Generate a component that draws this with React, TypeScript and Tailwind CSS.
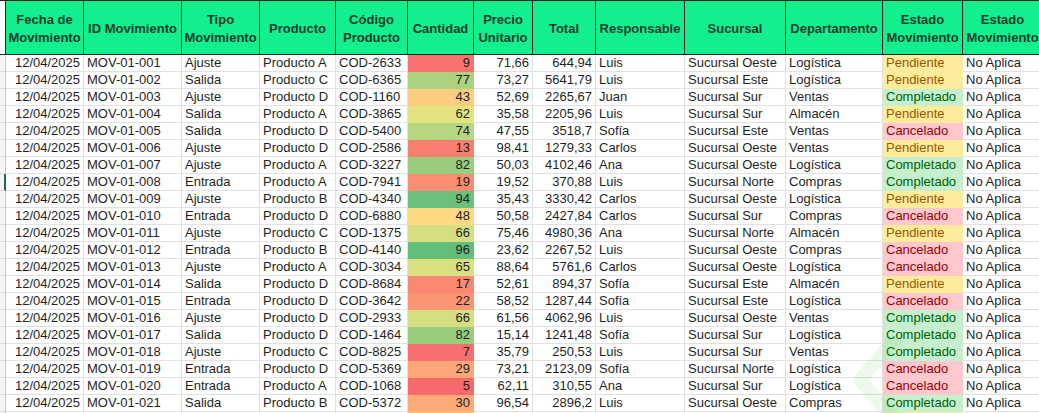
import React from "react";

type Estado = "Pendiente" | "Completado" | "Cancelado";

interface Movimiento {
  id: string;
  tipo: string;
  producto: string;
  codigo: string;
  cantidad: number;
  precio: string;
  total: string;
  responsable: string;
  sucursal: string;
  departamento: string;
  estado: Estado;
}

const COLS =
  "grid grid-cols-[6px_78px_98px_78px_76px_72px_66px_59px_63px_89px_101px_97px_80px_80px]";

const HEADERS = [
  "Fecha de Movimiento",
  "ID Movimiento",
  "Tipo Movimiento",
  "Producto",
  "Código Producto",
  "Cantidad",
  "Precio Unitario",
  "Total",
  "Responsable",
  "Sucursal",
  "Departamento",
  "Estado Movimiento",
  "Estado Movimiento",
];

const raw: [string, string, string, string, number, string, string, string, string, string, Estado][] = [
  ["001", "Ajuste", "Producto A", "COD-2633", 9, "71,66", "644,94", "Luis", "Sucursal Oeste", "Logística", "Pendiente"],
  ["002", "Salida", "Producto C", "COD-6365", 77, "73,27", "5641,79", "Luis", "Sucursal Este", "Logística", "Pendiente"],
  ["003", "Ajuste", "Producto D", "COD-1160", 43, "52,69", "2265,67", "Juan", "Sucursal Sur", "Ventas", "Completado"],
  ["004", "Salida", "Producto A", "COD-3865", 62, "35,58", "2205,96", "Luis", "Sucursal Sur", "Almacén", "Pendiente"],
  ["005", "Salida", "Producto D", "COD-5400", 74, "47,55", "3518,7", "Sofía", "Sucursal Este", "Ventas", "Cancelado"],
  ["006", "Ajuste", "Producto D", "COD-2586", 13, "98,41", "1279,33", "Carlos", "Sucursal Oeste", "Ventas", "Pendiente"],
  ["007", "Ajuste", "Producto A", "COD-3227", 82, "50,03", "4102,46", "Ana", "Sucursal Oeste", "Logística", "Completado"],
  ["008", "Entrada", "Producto A", "COD-7941", 19, "19,52", "370,88", "Luis", "Sucursal Norte", "Compras", "Completado"],
  ["009", "Ajuste", "Producto B", "COD-4340", 94, "35,43", "3330,42", "Carlos", "Sucursal Oeste", "Logística", "Pendiente"],
  ["010", "Entrada", "Producto D", "COD-6880", 48, "50,58", "2427,84", "Carlos", "Sucursal Sur", "Compras", "Cancelado"],
  ["011", "Ajuste", "Producto C", "COD-1375", 66, "75,46", "4980,36", "Ana", "Sucursal Norte", "Almacén", "Pendiente"],
  ["012", "Entrada", "Producto B", "COD-4140", 96, "23,62", "2267,52", "Luis", "Sucursal Oeste", "Compras", "Cancelado"],
  ["013", "Ajuste", "Producto A", "COD-3034", 65, "88,64", "5761,6", "Carlos", "Sucursal Oeste", "Logística", "Cancelado"],
  ["014", "Salida", "Producto D", "COD-8684", 17, "52,61", "894,37", "Sofía", "Sucursal Este", "Almacén", "Pendiente"],
  ["015", "Entrada", "Producto D", "COD-3642", 22, "58,52", "1287,44", "Sofía", "Sucursal Este", "Logística", "Cancelado"],
  ["016", "Ajuste", "Producto D", "COD-2933", 66, "61,56", "4062,96", "Luis", "Sucursal Oeste", "Ventas", "Completado"],
  ["017", "Salida", "Producto D", "COD-1464", 82, "15,14", "1241,48", "Sofía", "Sucursal Sur", "Logística", "Completado"],
  ["018", "Ajuste", "Producto C", "COD-8825", 7, "35,79", "250,53", "Luis", "Sucursal Sur", "Ventas", "Completado"],
  ["019", "Entrada", "Producto D", "COD-5369", 29, "73,21", "2123,09", "Sofía", "Sucursal Norte", "Logística", "Cancelado"],
  ["020", "Entrada", "Producto A", "COD-1068", 5, "62,11", "310,55", "Ana", "Sucursal Sur", "Logística", "Cancelado"],
  ["021", "Salida", "Producto B", "COD-5372", 30, "96,54", "2896,2", "Luis", "Sucursal Oeste", "Compras", "Completado"],
];

const rows: Movimiento[] = raw.map((r) => ({
  id: `MOV-01-${r[0]}`,
  tipo: r[1],
  producto: r[2],
  codigo: r[3],
  cantidad: r[4],
  precio: r[5],
  total: r[6],
  responsable: r[7],
  sucursal: r[8],
  departamento: r[9],
  estado: r[10],
}));

// 3-colour scale like Excel's red / yellow / green
function scaleColor(v: number) {
  const min = 5;
  const mid = 55;
  const max = 96;
  const lo = [248, 105, 107];
  const md = [255, 235, 132];
  const hi = [99, 190, 123];
  let a = lo;
  let b = md;
  let t = (v - min) / (mid - min);
  if (v >= mid) {
    a = md;
    b = hi;
    t = (v - mid) / (max - mid);
  }
  t = Math.max(0, Math.min(1, t));
  const c = a.map((x, i) => Math.round(x + (b[i] - x) * t));
  return `rgb(${c[0]}, ${c[1]}, ${c[2]})`;
}

const estadoClass: Record<Estado, string> = {
  Pendiente: "bg-[#ffeb9c] text-[#9c5700]",
  Completado: "bg-[#c6efce] text-[#006100]",
  Cancelado: "bg-[#ffc7ce] text-[#9c0006]",
};

const cell = "h-[17px] border-r border-b border-[#e1e1e1] px-[3px] flex items-center whitespace-nowrap overflow-hidden";

export default function App() {
  return (
    <div className="relative w-[1039px] h-[413px] overflow-hidden bg-white font-['Liberation_Sans',Arial,sans-serif] text-[13px] leading-[16px] text-[#1f1f1f]">
      <div className={`${COLS} border-t border-[#222]`}>
        <div className="h-[54px] bg-white border-r border-b border-[#222]" />
        {HEADERS.map((h, i) => (
          <div
            key={i}
            className="h-[54px] bg-[#12ef8e] border-r border-b border-[#222] flex items-center justify-center text-center font-bold leading-[18px] text-[#123d2b] px-[1px] pt-[3px]"
          >
            {h}
          </div>
        ))}
      </div>

      {rows.map((r, idx) => (
        <div key={r.id} className={COLS}>
          <div
            className={`h-[17px] border-b border-[#dadada] bg-[#f5f5f5] ${
              idx === 7 ? "border-r-2 border-r-[#1e7145]" : "border-r border-r-[#c8c8c8]"
            }`}
          />
          <div className={`${cell} justify-end`}>12/04/2025</div>
          <div className={cell}>{r.id}</div>
          <div className={cell}>{r.tipo}</div>
          <div className={cell}>{r.producto}</div>
          <div className={cell}>{r.codigo}</div>
          <div
            className={`${cell} justify-end border-transparent`}
            style={{ backgroundColor: scaleColor(r.cantidad) }}
          >
            {r.cantidad}
          </div>
          <div className={`${cell} justify-end`}>{r.precio}</div>
          <div className={`${cell} justify-end`}>{r.total}</div>
          <div className={cell}>{r.responsable}</div>
          <div className={cell}>{r.sucursal}</div>
          <div className={cell}>{r.departamento}</div>
          <div className={`${cell} border-transparent ${estadoClass[r.estado]}`}>{r.estado}</div>
          <div className={cell}>No Aplica</div>
        </div>
      ))}

      {/* next row, only its top edge shows */}
      <div className={COLS}>
        <div className="h-[17px] bg-[#f5f5f5] border-r border-[#c8c8c8]" />
        {Array.from({ length: 13 }).map((_, i) => (
          <div
            key={i}
            className={`h-[17px] border-r ${
              i === 5 ? "border-transparent" : i === 11 ? "border-transparent bg-[#ffeb9c]" : "border-[#e1e1e1]"
            }`}
            style={i === 5 ? { backgroundColor: scaleColor(38) } : undefined}
          />
        ))}
      </div>

      {/* faint watermark in the corner */}
      <svg
        className="absolute left-[848px] top-[330px] pointer-events-none"
        width="70"
        height="100"
        viewBox="0 0 70 100"
        fill="none"
      >
        <path d="M48 8 L12 50 L48 92" stroke="#86c96a" strokeOpacity="0.13" strokeWidth="14" strokeLinejoin="round" />
      </svg>
    </div>
  );
}
